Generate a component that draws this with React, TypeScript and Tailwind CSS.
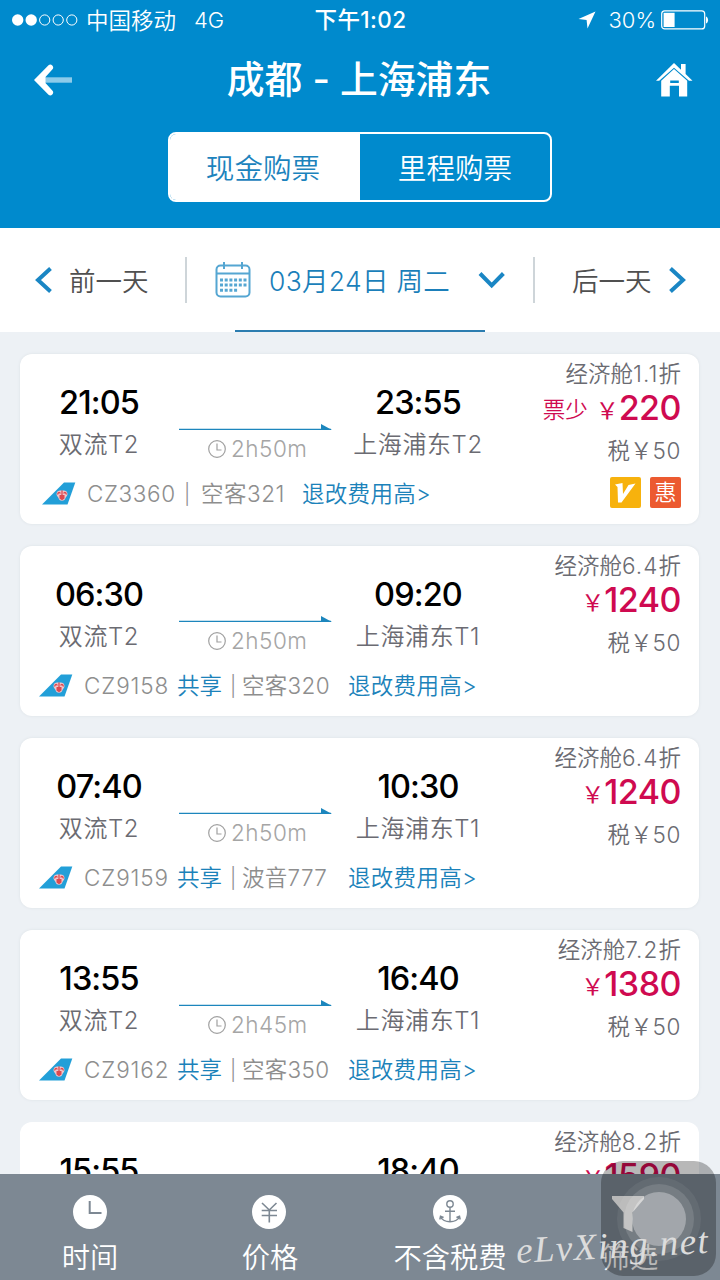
import { useState } from "react";

interface Vuelo {
  code: string;
  shared: boolean;
  plane: string;
  depTime: string;
  depPlace: string;
  arrTime: string;
  arrPlace: string;
  duration: string;
  discount: string;
  price: string;
  fewLeft?: boolean;
  badges?: boolean;
}

const flights: Vuelo[] = [
  { code: "CZ3360", shared: false, plane: "空客321", depTime: "21:05", depPlace: "双流T2", arrTime: "23:55", arrPlace: "上海浦东T2", duration: "2h50m", discount: "1.1", price: "220", fewLeft: true, badges: true },
  { code: "CZ9158", shared: true, plane: "空客320", depTime: "06:30", depPlace: "双流T2", arrTime: "09:20", arrPlace: "上海浦东T1", duration: "2h50m", discount: "6.4", price: "1240" },
  { code: "CZ9159", shared: true, plane: "波音777", depTime: "07:40", depPlace: "双流T2", arrTime: "10:30", arrPlace: "上海浦东T1", duration: "2h50m", discount: "6.4", price: "1240" },
  { code: "CZ9162", shared: true, plane: "空客350", depTime: "13:55", depPlace: "双流T2", arrTime: "16:40", arrPlace: "上海浦东T1", duration: "2h45m", discount: "7.2", price: "1380" },
];

const StatusBar = () => (
  <div className="flex h-10 items-center text-[22.5px] text-white">
    <div className="flex flex-1 items-center pl-3">
      <svg width="66" height="12" viewBox="0 0 66 12" fill="none" stroke="#fff">
        <circle cx="5.7" cy="6" r="5.7" fill="#fff" stroke="none" />
        <circle cx="19.2" cy="6" r="5.7" fill="#fff" stroke="none" />
        <circle cx="32.7" cy="6" r="5.1" />
        <circle cx="46.2" cy="6" r="5.1" />
        <circle cx="59.8" cy="6" r="5.1" />
      </svg>
      <span className="ml-2 pt-px font-[350]">中国移动</span>
      <span className="ml-[18px] text-[22px] font-[350]">4G</span>
    </div>
    <span className="font-medium tracking-[0.4px]">下午1:02</span>
    <div className="flex flex-1 items-center justify-end pr-[11px]">
      <svg width="18" height="18" viewBox="0 0 18 18" fill="#fff">
        <path d="M17.5 0.5L9.5 17.5L8.6 9L0.5 8Z" />
      </svg>
      <span className="ml-3 text-[22px] font-[350]">30%</span>
      <svg className="ml-[5px]" width="48" height="20" viewBox="0 0 48 20">
        <rect x="0.7" y="0.9" width="43" height="18" rx="3" fill="none" stroke="#fff" strokeWidth="1.2" />
        <rect x="2.6" y="2.8" width="11" height="14.2" fill="#fff" />
        <path d="M45 6.5C47.8 7.5 47.8 12.5 45 13.5Z" fill="#fff" />
      </svg>
    </div>
  </div>
);

const Header = ({ mode, setMode }: { mode: string; setMode: (m: string) => void }) => (
  <header className="h-[228px] bg-[#008acd]">
    <StatusBar />
    <div className="flex h-20 items-center justify-between pr-[27px] pl-[33px]">
      <svg width="40" height="32" viewBox="0 0 40 32">
        <path d="M10 13.3H39V18.7H10Z" fill="#8dcbea" />
        <path d="M1 16L15.5 1.2Q17.5 -0.5 19.3 1.5Q21 3.5 19.5 5.3L12.5 13V19L19.5 26.7Q21 28.5 19.3 30.5Q17.5 32.5 15.5 30.8Z" fill="#fff" />
      </svg>
      <h1 className="mr-[11px] text-[37.8px] leading-none font-medium whitespace-pre text-white">成都 - 上海浦东</h1>
      <svg width="37" height="34" viewBox="0 0 37 34">
        <path d="M18 0L25 6.7V1H29.6V11.1L36.5 17.7H33L18 4.7L3.2 17.7H0Z" fill="#fff" />
        <path d="M18 6L31.2 17.8V33.5H23V22.8H13.8V33.5H5.2V17.8Z" fill="#fff" />
        <path d="M14.2 17.5H22.8V20H14.2Z" fill="#008acd" />
      </svg>
    </div>
    <div className="mx-auto mt-3 flex h-[70px] w-96 overflow-hidden rounded-lg border-2 border-white text-[28.6px]">
      {["现金购票", "里程购票"].map((label) => (
        <button
          key={label}
          onClick={() => setMode(label)}
          className={mode === label ? "w-1/2 bg-white pt-1 pr-1 font-[350] text-[#1c83bd]" : "w-1/2 pt-1 font-[350] text-white"}
        >
          {label}
        </button>
      ))}
    </div>
  </header>
);

const DateBar = () => (
  <div className="flex h-26 flex-col bg-white">
    <div className="flex h-[102px] items-center pt-0.5 text-[26.5px]">
      <button className="flex h-full w-[185px] items-center pl-[35px] font-[350] text-[#505050]">
        <svg width="17" height="26" viewBox="0 0 17 26" fill="none" stroke="#1a86c4" strokeWidth="4">
          <path d="M15.5 1.5L3 13L15.5 24.5" />
        </svg>
        <span className="ml-[17px] pt-1">前一天</span>
      </button>
      <div className="h-[46px] w-0.5 bg-[#ced5d9]" />
      <button className="flex h-full w-[346px] items-center pl-[28px] font-[350] text-[#1b7fba]">
        <svg width="36" height="36" viewBox="0 0 36 36" fill="none" stroke="#55a6d2" strokeWidth="2">
          <rect x="1.5" y="3.5" width="33" height="31" rx="4" />
          <path d="M1.5 11.5H34.5M9 0V7M27 0V7" />
          <path d="M5 18H32M5 23H32" strokeWidth="3" strokeDasharray="3 1.7" />
          <path d="M5 28.3H22.5" strokeWidth="3" strokeDasharray="3 1.7" />
        </svg>
        <span className="ml-[18px] pt-1 tracking-[0.3px] whitespace-nowrap">03月24日 周二</span>
        <svg className="ml-[28px]" width="28" height="18" viewBox="0 0 28 18" fill="none" stroke="#1a86c4" strokeWidth="4">
          <path d="M2 2.5L13.7 14.5L25.4 2.5" />
        </svg>
      </button>
      <div className="h-[46px] w-0.5 bg-[#ced5d9]" />
      <button className="flex h-full flex-1 items-center pl-[37px] font-[350] text-[#505050]">
        <span className="pt-1">后一天</span>
        <svg className="ml-[17px]" width="17" height="26" viewBox="0 0 17 26" fill="none" stroke="#1a86c4" strokeWidth="4">
          <path d="M1.5 1.5L14 13L1.5 24.5" />
        </svg>
      </button>
    </div>
    <div className="mx-auto h-0.5 w-[250px] bg-[#2c7db0]" />
  </div>
);

const TailLogo = () => (
  <svg className="mb-0.5 shrink-0" width="34" height="23" viewBox="0 0 34 23">
    <path d="M22 0.5H33.3L25.5 22.5H0Z" fill="#229fd8" />
    <path d="M14.5 12C14.5 8.5 18 8 20 8.8C22 8 25.5 8.5 25.5 12C25.5 14 24 14.5 23.3 16.5C22.5 19.5 17.5 19.5 16.7 16.5C16 14.5 14.5 14 14.5 12Z" fill="#f0c6cc" />
    <path d="M17.5 13H22.5V16.5L20 18.3L17.5 16.5Z" fill="#dc4a50" />
    <path d="M20 8.5V14M15.6 12.5C16 10 18 10 18.3 11.5M24.4 12.5C24 10 22 10 21.7 11.5" fill="none" stroke="#dc4a50" strokeWidth="1.3" />
  </svg>
);

const Price = ({ value, fewLeft }: { value: string; fewLeft?: boolean }) => (
  <p className="flex h-8 items-baseline leading-8 text-[#cf0a50]">
    {fewLeft && <span className="relative bottom-0.5 mr-2 text-[22.5px] font-[350]">票少</span>}
    <span className="relative bottom-px text-[23px] font-normal">￥</span>
    <span className="text-[34px] font-medium tracking-[-0.5px]">{value}</span>
  </p>
);

const FlightCard = ({ flight }: { flight: Vuelo }) => (
  <div className="flex h-[170px] w-[679px] shrink-0 rounded-xl bg-white shadow-[0_0_3px_#dbe1e5]">
    <div className="w-[484px] pt-[29px]">
      <div className="flex h-[87px] text-center">
        <div className="w-[158px]">
          <p className="h-10 text-[32.5px] leading-10 font-medium tracking-[-0.9px] text-black">{flight.depTime}</p>
          <p className="h-10 text-[24px] leading-[43px] font-[350] tracking-[0.6px] text-[#6b6b72]">{flight.depPlace}</p>
        </div>
        <div className="ml-px w-[153px] pt-10">
          <svg width="153" height="8" viewBox="0 0 153 8">
            <path d="M0 6.4H152" stroke="#1c86bd" strokeWidth="1.3" />
            <path d="M142 1L153 7H142Z" fill="#1c86bd" />
          </svg>
          <div className="flex h-[35px] items-center pl-[29px] text-[22.5px] text-[#a5a5a5]">
            <svg className="shrink-0" width="18" height="18" viewBox="0 0 18 18" fill="none" stroke="#a0a0a0" strokeWidth="1.2">
              <circle cx="9" cy="9" r="8.3" />
              <path d="M9 3.5V10H13.5" />
            </svg>
            <span className="ml-[5px] pt-px font-[350] tracking-[0.5px]">{flight.duration}</span>
          </div>
        </div>
        <div className="w-[172px]">
          <p className="h-10 text-[32.5px] leading-10 font-medium tracking-[-0.9px] text-black">{flight.arrTime}</p>
          <p className="h-10 text-[24px] leading-[43px] font-[350] tracking-[0.6px] text-[#6b6b72]">{flight.arrPlace}</p>
        </div>
      </div>
      <div className={flight.shared ? "flex h-12 items-center pl-[19px] text-[22.5px] font-[350] whitespace-nowrap text-[#8e8e8e]" : "flex h-12 items-center pl-[22px] text-[22.5px] font-[350] whitespace-nowrap text-[#8e8e8e]"}>
        <TailLogo />
        <span className={flight.shared ? "ml-[11px] w-[93px] tracking-[0.9px]" : "ml-[11px] w-[97px] tracking-[0.6px]"}>{flight.code}</span>
        {flight.shared && <span className="w-[53px] text-[#1b82ba]">共享</span>}
        <span className={flight.shared ? "w-3 text-[20px]" : "w-[17px] text-[20px]"}>|</span>
        <span className={flight.shared ? "w-[106px] tracking-[0.3px]" : "w-[101px] tracking-[0.5px]"}>{flight.plane}</span>
        <span className="tracking-[0.3px] text-[#1b82ba]">退改费用高&gt;</span>
      </div>
    </div>
    <div className="flex flex-1 flex-col items-end pr-[18px] font-[350] whitespace-nowrap text-[#6b6b72]">
      <p className="h-[38px] text-[22.5px] leading-10">
        经济舱<span className="tracking-[1.1px]">{flight.discount}</span>折
      </p>
      <Price value={flight.price} fewLeft={flight.fewLeft} />
      <p className="mt-3 h-[30px] text-[22.5px] leading-[30px]">
        税￥<span className="tracking-[0.6px]">50</span>
      </p>
      {flight.badges && (
        <div className="mt-[11px] flex gap-[9px]">
          <svg width="31" height="31" viewBox="0 0 31 31">
            <rect width="31" height="31" rx="2" fill="#f7b20d" />
            <path d="M5 7.5L12.5 6L13 17L18.5 8L25.5 6.5L11.5 25.5H8L7.5 10Z" fill="#fff" />
          </svg>
          <span className="h-[31px] w-[31px] rounded-xs bg-[#ec5a30] text-center text-[22px] leading-[31px] text-white">惠</span>
        </div>
      )}
    </div>
  </div>
);

// última tarjeta, cortada por la barra inferior
const PartialCard = () => (
  <div className="flex h-[52px] w-[679px] shrink-0 overflow-hidden rounded-t-xl bg-white">
    <div className="flex w-[484px] pt-[29px] text-center text-[32.5px] leading-10 font-medium tracking-[-0.9px] text-black">
      <p className="w-[158px]">15:55</p>
      <p className="ml-[154px] w-[172px]">18:40</p>
    </div>
    <div className="flex flex-1 flex-col items-end pr-[18px] whitespace-nowrap">
      <p className="h-[38px] text-[22.5px] leading-10 font-[350] text-[#6b6b72]">
        经济舱<span className="tracking-[1.1px]">8.2</span>折
      </p>
      <Price value="1590" />
    </div>
  </div>
);

const BottomBar = () => (
  <nav className="grid h-[106px] w-full grid-cols-4 bg-[#7d8893] text-center text-[28.3px] font-[350] text-white">
    <div className="flex flex-col items-center pt-[21px]">
      <svg width="34" height="34" viewBox="0 0 34 34">
        <circle cx="17" cy="17" r="17" fill="#fff" />
        <path d="M16.7 6V18H28.5" fill="none" stroke="#7d8893" strokeWidth="2" />
      </svg>
      <span className="mt-[9px] leading-10">时间</span>
    </div>
    <div className="flex flex-col items-center pt-[21px]">
      <svg className="mr-0.5" width="34" height="34" viewBox="0 0 34 34">
        <circle cx="17" cy="17" r="17" fill="#fff" />
        <path d="M10 8L17.3 15L24.5 8M17.3 15V27.5M9.7 15.5H25M9.7 20.5H25" fill="none" stroke="#7d8893" strokeWidth="1.6" />
      </svg>
      <span className="mt-[9px] leading-10">价格</span>
    </div>
    <div className="flex flex-col items-center pt-[21px]">
      <svg width="34" height="34" viewBox="0 0 34 34">
        <circle cx="17" cy="17" r="17" fill="#fff" />
        <g fill="none" stroke="#7d8893" strokeWidth="1.4">
          <circle cx="17" cy="9" r="3.2" />
          <path d="M17 12.2V27M12 16.3H22M7.5 21.5C8.5 25 13 26.8 17 26.8C21 26.8 25.5 25 26.5 21.5M6.8 24.5L7.5 21.3L10.6 22.5M27.2 24.5L26.5 21.3L23.4 22.5" />
        </g>
      </svg>
      <span className="mt-[9px] leading-10">不含税费</span>
    </div>
    <div className="flex flex-col items-center pt-[21px]">
      <svg className="mr-1" width="34" height="38" viewBox="0 0 34 38">
        <path d="M1 1H33V4L21.5 17.5V37L12.5 33V17.5L1 4Z" fill="#fff" />
      </svg>
      <span className="mt-[5px] leading-10">筛选</span>
    </div>
  </nav>
);

// botón flotante de AssistiveTouch
const AssistiveTouch = () => (
  <div className="absolute top-[1161px] left-[601px] flex h-[115px] w-[115px] items-center justify-center rounded-[22px] bg-black/28">
    <div className="flex h-[84px] w-[84px] items-center justify-center rounded-full bg-white/6">
      <div className="flex h-[70px] w-[70px] items-center justify-center rounded-full bg-white/12">
        <div className="h-[54px] w-[54px] rounded-full bg-white/32" />
      </div>
    </div>
  </div>
);

export default function App() {
  const [mode, setMode] = useState("现金购票");

  return (
    <div className="relative flex h-[1280px] w-[720px] flex-col overflow-hidden bg-[#edf1f5] font-['Inter','Noto_Sans_CJK_SC',sans-serif]">
      <Header mode={mode} setMode={setMode} />
      <DateBar />
      <main className="flex h-[842px] flex-col gap-[22px] overflow-hidden pt-[22px] pl-5">
        {flights.map((f) => (
          <FlightCard key={f.code} flight={f} />
        ))}
        <PartialCard />
      </main>
      <BottomBar />
      <AssistiveTouch />
      <span className="absolute top-[1224px] left-[516px] -rotate-3 font-['Liberation_Serif',serif] text-[37px] leading-[44px] tracking-[1.4px] text-[#dcdcdc] italic">
        eLvXing.net
      </span>
    </div>
  );
}
